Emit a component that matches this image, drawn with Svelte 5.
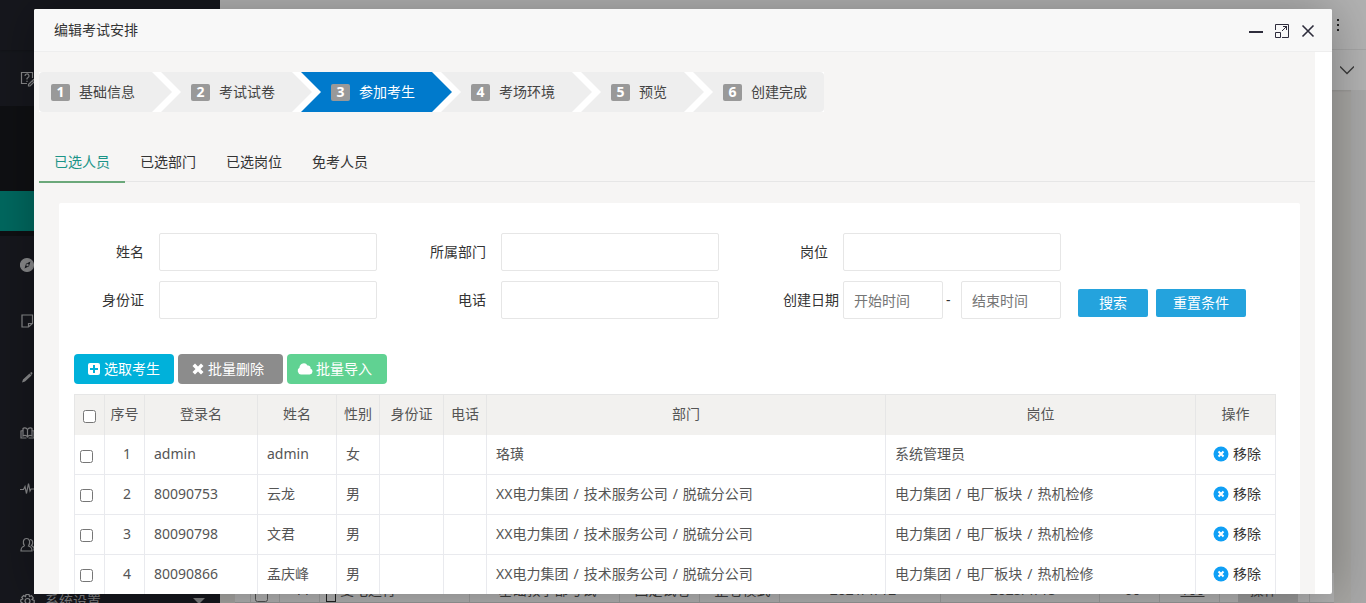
<script>
  let steps = ['基础信息', '考试试卷', '参加考生', '考场环境', '预览', '创建完成'];
  let currentStep = 2;

  let tabs = ['已选人员', '已选部门', '已选岗位', '免考人员'];
  let activeTab = 0;

  let columns = ['序号', '登录名', '姓名', '性别', '身份证', '电话', '部门', '岗位', '操作'];

  const dept = ['XX电力集团', '技术服务公司', '脱硫分公司'];
  const post = ['电力集团', '电厂板块', '热机检修'];

  let people = [
    { login: 'admin', name: 'admin', sex: '女', dept: ['珞璜'], post: ['系统管理员'] },
    { login: '80090753', name: '云龙', sex: '男', dept, post },
    { login: '80090798', name: '文君', sex: '男', dept, post },
    { login: '80090866', name: '孟庆峰', sex: '男', dept, post }
  ];

  function removePerson(person) {
    people = people.filter((p) => p !== person);
  }
</script>

<div class="page">
  <nav class="sidebar">
    <div class="logo"></div>
    <a class="menu-item" href="#exam" aria-label="exam">
      <svg viewBox="0 0 16 16"><path d="M7 12.500H1.500V1.500h11V7M5 5a2 2 0 1 1 2.800 1.800L7 7.500v1M7 9.800v1.200" /><path d="M8.500 13.500l5-5 1.500 1.500-5 5H8.500zM12 10l1.500 1.500" /></svg>
    </a>
    <div class="submenu">
      <div class="sub-item"></div>
      <div class="sub-item"></div>
      <div class="sub-item active"></div>
    </div>
    <a class="menu-item" href="#guide" aria-label="guide">
      <svg viewBox="0 0 16 16"><circle class="solid" cx="7" cy="8" r="6.500" /><path class="dark" d="M10.500 4.500L6 6.800l-1.500 4.700L9 9.300z" /><circle class="solid" cx="7.500" cy="8" r=".6" /></svg>
    </a>
    <a class="menu-item" href="#notes" aria-label="notes">
      <svg viewBox="0 0 16 16"><path d="M8.500 14H2V2h10.500v8.500zM8.500 14v-3.500h4" /></svg>
    </a>
    <a class="menu-item" href="#edit" aria-label="edit">
      <svg viewBox="0 0 16 16"><path class="pencil" d="M2 13.500l1-3 6.500-6 2 2-6.500 6zM10 4l1.500-1 1 1L11.800 6z" /></svg>
    </a>
    <a class="menu-item" href="#book" aria-label="book">
      <svg viewBox="0 0 16 16"><path d="M7.500 4.500C6 2.500 4 2.500 3 3.500v7.500c2-1 3.500-.500 4.500 1 1-1.500 2.500-2 4.500-1V3.500c-1-1-3-1-4.500 1V12M3 5.500L1 6v7h5.500M12 5.500l2 .5v7H8.500" /></svg>
    </a>
    <a class="menu-item" href="#stats" aria-label="stats">
      <svg viewBox="0 0 16 16"><path d="M0 8.500h3.500l1.500-3 1.500 7 2-10L10 10l1-2h4.500" /></svg>
    </a>
    <a class="menu-item" href="#users" aria-label="users">
      <svg viewBox="0 0 16 16"><path d="M4.500 9C2.500 6 3 1.500 6.500 1.500S10.500 6 8.500 9c3 1 3.500 2 3.500 5H1c0-3 .500-4 3.500-5M10 2.500c3 0 3.500 4 1.500 6 2 1 3 2 3 4.500H13" /></svg>
    </a>
    <a class="menu-item" href="#settings">
      <svg viewBox="0 0 16 16"><circle cx="7.500" cy="8" r="2.500" /><path d="M6 1.500h3l.5 2 2-.8 1.800 2.300-1.300 1.500 2.200 1v2.500l-2.200.6 1 2-2 1.900-2-1L8.500 15h-2.500l-.7-1.800-2 .8-1.800-2 1-2L.8 9V6.800L2.800 6l-1-1.700L3.700 2.500l1.800 1z" /></svg>
      <span>系统设置</span>
      <i class="caret"></i>
    </a>
  </nav>

  <div class="main">
    <header class="topbar">
      <svg class="dots" viewBox="0 0 4 16"><path d="M1 2h2v2h-2zM1 7h2v2h-2zM1 12h2v2h-2z" /></svg>
    </header>
    <div class="tagbar">
      <svg class="chevron" viewBox="0 0 14 14"><path d="M0 3.500l7 7 7-7" /></svg>
    </div>
    <div class="content">
      <div class="exam-row">
        <span style="width: 16px"></span>
        <span class="pick-exam" style="width: 29px"><input type="checkbox" aria-label="select exam" /></span>
        <span style="width: 40px">11</span>
        <span class="left" style="width: 150px"><i class="box"></i>变电运行</span>
        <span style="width: 150px">基础教学部考试</span>
        <span style="width: 80px">固定试卷</span>
        <span style="width: 80px">整卷模式</span>
        <span style="width: 161px">2021/1/12</span>
        <span style="width: 159px">2025/1/15</span>
        <span style="width: 60px">60</span>
        <span style="width: 60px"><a href="#score">100</a></span>
        <span style="width: 90px"><button class="more">操作 ·</button></span>
      </div>
    </div>
  </div>

  <div class="shade"></div>

  <section class="dialog">
    <header class="dialog-title">
      <span>编辑考试安排</span>
      <div class="controls">
        <button aria-label="minimize"><svg viewBox="0 0 16 16"><path class="thick" d="M1 10h14" /></svg></button>
        <button aria-label="maximize"><svg viewBox="0 0 16 16"><path class="thin" d="M1.500 8V2.500h13v13H8M1.500 10.500h5v5h-5zM8 9l5-5M9 4.500h3.500V8" /></svg></button>
        <button aria-label="close"><svg viewBox="0 0 16 16"><path class="cross" d="M2.500 3.500l11 11M13.500 3.500l-11 11" /></svg></button>
      </div>
    </header>

    <div class="dialog-body">
      <div class="inner">
        <ol class="steps">
          {#each steps as step, i}
            <li class:current={i === currentStep}><b>{i + 1}</b>{step}</li>
          {/each}
        </ol>

        <div class="tabs">
          {#each tabs as tab, i}
            <button class="tab" class:active={i === activeTab} on:click={() => (activeTab = i)}>{tab}</button>
          {/each}
        </div>

        <div class="panel">
          <form class="search" on:submit|preventDefault>
            <div class="form-row">
              <div class="field"><label for="name">姓名</label><input id="name" type="text" /></div>
              <div class="field"><label for="dept">所属部门</label><input id="dept" type="text" /></div>
              <div class="field"><label for="post">岗位</label><input id="post" type="text" /></div>
            </div>
            <div class="form-row">
              <div class="field"><label for="idcard">身份证</label><input id="idcard" type="text" /></div>
              <div class="field"><label for="phone">电话</label><input id="phone" type="text" /></div>
              <div class="field">
                <label class="wide" for="start">创建日期</label>
                <input id="start" class="date" type="text" placeholder="开始时间" />
                <span class="dash">-</span>
                <input class="date" type="text" placeholder="结束时间" aria-label="结束时间" />
              </div>
              <div class="actions">
                <button type="submit">搜索</button>
                <button type="reset">重置条件</button>
              </div>
            </div>
          </form>

          <div class="toolbar">
            <button class="pick">
              <svg viewBox="0 0 14 14"><path fill-rule="evenodd" d="M3 1h8a2 2 0 0 1 2 2v8a2 2 0 0 1-2 2H3a2 2 0 0 1-2-2V3a2 2 0 0 1 2-2zM6 3v3H3v2h3v3h2V8h3V6H8V3z" /></svg>
              选取考生
            </button>
            <button class="delete">
              <svg viewBox="0 0 14 14"><path d="M4 1.500l3 3 3-3L12.500 4l-3 3 3 3-2.500 2.500-3-3-3 3L1.500 10l3-3-3-3z" /></svg>
              批量删除
            </button>
            <button class="import">
              <svg class="cloud" viewBox="0 0 16 14"><path d="M4 12.500A3.800 3.800 0 0 1 2.500 5.500 4.300 4.300 0 0 1 10.500 3.500a2.500 2.500 0 0 1 3 3 3.100 3.100 0 0 1-.800 6z" /></svg>
              批量导入
            </button>
          </div>

          <table>
            <colgroup>
              <col style="width: 30px" />
              <col style="width: 40px" />
              <col style="width: 113px" />
              <col style="width: 79px" />
              <col style="width: 43px" />
              <col style="width: 64px" />
              <col style="width: 43px" />
              <col />
              <col style="width: 310px" />
              <col style="width: 80px" />
            </colgroup>
            <thead>
              <tr>
                <th><input type="checkbox" aria-label="select all" /></th>
                {#each columns as column}
                  <th>{column}</th>
                {/each}
              </tr>
            </thead>
            <tbody>
              {#each people as person, i}
                <tr>
                  <td class="check"><input type="checkbox" aria-label={person.name} /></td>
                  <td class="num">{i + 1}</td>
                  <td>{person.login}</td>
                  <td>{person.name}</td>
                  <td>{person.sex}</td>
                  <td></td>
                  <td></td>
                  <td>{#each person.dept as part, n}{#if n > 0}<span class="slash">/</span>{/if}{part}{/each}</td>
                  <td>{#each person.post as part, n}{#if n > 0}<span class="slash">/</span>{/if}{part}{/each}</td>
                  <td class="op">
                    <button on:click={() => removePerson(person)}>
                      <svg viewBox="0 0 16 16"><circle cx="8" cy="8" r="7.500" /><path d="M5.500 5.500l5 5M10.500 5.500l-5 5" /></svg>
                      移除
                    </button>
                  </td>
                </tr>
              {/each}
            </tbody>
          </table>
        </div>
      </div>
    </div>
  </section>
</div>

<style>
  .page {
    position: relative;
    display: flex;
    height: 100vh;
    overflow: hidden;
    font-family: "Noto Sans", "Noto Sans CJK SC", sans-serif;
    font-size: 14px;
    line-height: 20px;
    color: #333;
  }

  .page * {
    box-sizing: border-box;
  }

  button {
    font: inherit;
    color: inherit;
    border: none;
    background: none;
    padding: 0;
    cursor: pointer;
  }

  input {
    font: inherit;
  }

  input[type="checkbox"] {
    width: 13px;
    height: 13px;
    margin: 0;
  }

  /* sidebar */
  .sidebar {
    width: 220px;
    flex-shrink: 0;
    background: #20222a;
  }

  .logo {
    height: 50px;
    box-shadow: 0 1px 2px rgba(0, 0, 0, 0.15);
  }

  .menu-item {
    display: flex;
    align-items: center;
    height: 56px;
    padding: 2px 15px 0 20px;
    color: #b5b6b9;
    text-decoration: none;
  }

  .menu-item svg {
    width: 16px;
    height: 16px;
    margin-right: 9px;
    fill: none;
    stroke: #c4c5c8;
    stroke-width: 1.2;
  }

  .menu-item .solid {
    fill: #c4c5c8;
  }

  .menu-item .pencil {
    fill: #c4c5c8;
    stroke: none;
  }

  .menu-item .dark {
    fill: #20222a;
    stroke: none;
  }

  .caret {
    margin-left: auto;
    border: 6px solid transparent;
    border-top-color: #b5b6b9;
    border-bottom: none;
  }

  .submenu {
    padding: 5px 0;
    background: #16171c;
  }

  .sub-item {
    height: 40px;
  }

  .sub-item.active {
    background: #009688;
  }

  /* page behind the dialog */
  .main {
    flex: 1;
    display: flex;
    flex-direction: column;
    background: #f0eeea;
  }

  .topbar,
  .tagbar {
    display: flex;
    align-items: center;
    justify-content: flex-end;
    background: #fff;
  }

  .topbar {
    height: 50px;
    padding-right: 26px;
    border-bottom: 1px solid #eee;
  }

  .tagbar {
    height: 40px;
    padding-right: 12px;
    box-shadow: 0 1px 2px rgba(0, 0, 0, 0.1);
  }

  .dots {
    width: 4px;
    height: 16px;
    fill: #333;
  }

  .chevron {
    width: 14px;
    height: 14px;
    fill: none;
    stroke: #555;
    stroke-width: 1.4;
  }

  .content {
    flex: 1;
    display: flex;
    flex-direction: column;
    justify-content: flex-end;
    padding-left: 15px;
    border-right: 15px solid #f1f1f1;
  }

  .exam-row {
    display: flex;
    height: 30px;
    margin-right: 17px;
    border-bottom: 1px solid #ddd;
    background: #fff;
    color: #555;
  }

  .exam-row span {
    display: flex;
    align-items: center;
    justify-content: center;
    flex-shrink: 0;
    padding: 4px 0 0 6px;
    border-right: 1px solid #e2e2e2;
  }

  .exam-row .left {
    justify-content: flex-start;
  }

  .exam-row .pick-exam {
    align-items: flex-end;
    justify-content: flex-start;
    padding-left: 4px;
  }

  .exam-row a {
    color: inherit;
  }

  .box {
    width: 10px;
    height: 14px;
    margin-right: 4px;
    border: 1px solid #333;
    align-self: flex-end;
  }

  .more {
    width: 60px;
    height: 26px;
    background: #dcdcdc;
  }

  .shade {
    position: absolute;
    inset: 0;
    background: rgba(0, 0, 0, 0.3);
  }

  /* dialog */
  .dialog {
    position: absolute;
    inset: 9px 34px;
    display: flex;
    flex-direction: column;
    border-radius: 2px;
    background: #fff;
    box-shadow: 1px 1px 50px rgba(0, 0, 0, 0.3);
  }

  .dialog-title {
    display: flex;
    align-items: center;
    justify-content: space-between;
    height: 43px;
    flex-shrink: 0;
    padding: 0 16px 0 20px;
    border-bottom: 1px solid #eee;
    border-radius: 2px 2px 0 0;
    background: #f8f8f8;
  }

  .controls {
    display: flex;
    gap: 10px;
  }

  .controls svg {
    display: block;
    width: 16px;
    height: 16px;
    fill: none;
    stroke: #2e2d3c;
  }

  .thick {
    stroke-width: 2;
  }

  .cross {
    stroke-width: 1.6;
  }

  .dialog-body {
    flex: 1;
    min-height: 0;
    padding-right: 17px;
    overflow: hidden;
  }

  .inner {
    min-height: 100%;
    padding: 20px 0 15px 5px;
    background: #f6f5f4;
  }

  .steps {
    display: flex;
    width: fit-content;
    margin: 0 0 30px;
    padding: 0;
    list-style: none;
    background: #fff;
  }

  .steps li {
    display: flex;
    align-items: center;
    height: 40px;
    margin-right: -11px;
    padding: 0 37px 0 30px;
    background: #eee;
    clip-path: polygon(0 0, calc(100% - 20px) 0, 100% 50%, calc(100% - 20px) 100%, 0 100%, 20px 50%);
    color: #444;
  }

  .steps li:first-child {
    padding-left: 12px;
    border-radius: 4px 0 0 4px;
    clip-path: polygon(0 0, calc(100% - 20px) 0, 100% 50%, calc(100% - 20px) 100%, 0 100%);
  }

  .steps li:last-child {
    margin-right: 0;
    padding-right: 17px;
    border-radius: 0 4px 4px 0;
    clip-path: polygon(0 0, 100% 0, 100% 100%, 0 100%, 20px 50%);
  }

  .steps li.current {
    background: #007acc;
    color: #fff;
  }

  .steps b {
    width: 19px;
    height: 17px;
    margin-right: 9px;
    border-radius: 2px;
    background: #999;
    color: #fff;
    line-height: 16px;
    text-align: center;
  }

  .tabs {
    display: flex;
    height: 40px;
    border-bottom: 1px solid #e6e6e6;
  }

  .tab {
    height: 41px;
    padding: 0 15px;
    border-bottom: 2px solid transparent;
  }

  .tab.active {
    border-bottom-color: #6ba87a;
    color: #1c9488;
  }

  .panel {
    margin: 21px 15px 0 20px;
    padding: 30px 24px 15px 15px;
    border-radius: 2px;
    background: #fff;
  }

  .search {
    display: flex;
    flex-direction: column;
    gap: 10px;
    margin-bottom: 35px;
  }

  .form-row {
    display: flex;
    gap: 39px;
  }

  .field {
    display: flex;
    align-items: center;
  }

  .field label {
    width: 85px;
    padding-right: 15px;
    text-align: right;
  }

  .field label.wide {
    padding-right: 4px;
  }

  .field input {
    width: 218px;
    height: 38px;
    padding: 0 10px;
    border: 1px solid #e6e6e6;
    border-radius: 2px;
    background: #fff;
  }

  .field input.date {
    width: 100px;
  }

  .field input::placeholder {
    color: #757575;
  }

  .dash {
    width: 18px;
    padding-left: 3px;
  }

  .actions {
    display: flex;
    align-items: flex-end;
    gap: 8px;
    margin-left: -22px;
    padding-bottom: 2px;
  }

  .actions button {
    height: 28px;
    padding: 0 17px;
    min-width: 70px;
    border-radius: 2px;
    background: #24a3dd;
    color: #fff;
  }

  .toolbar {
    display: flex;
    gap: 4px;
    margin-bottom: 10px;
  }

  .toolbar button {
    display: flex;
    align-items: center;
    gap: 3px;
    width: 100px;
    height: 30px;
    padding-left: 13px;
    border-radius: 4px;
    color: #fff;
  }

  .toolbar svg {
    width: 14px;
    height: 14px;
    fill: #fff;
  }

  .toolbar svg.cloud {
    width: 16px;
  }

  .toolbar .pick {
    background: #00b1da;
  }

  .toolbar .delete {
    width: 105px;
    background: #8c8c8c;
  }

  .toolbar .import {
    padding-left: 10px;
    background: #60d292;
  }

  table {
    width: 100%;
    table-layout: fixed;
    border-collapse: collapse;
    color: #555;
  }

  th,
  td {
    height: 40px;
    padding: 0 0 2px;
    border: 1px solid #e9eaee;
  }

  th {
    border-color: #e6e6e6;
    border-bottom: none;
    background: #f2f1ef;
    font-weight: normal;
  }

  td {
    padding-left: 9px;
  }

  tbody tr:first-child td {
    padding-bottom: 0;
    border-top: none;
  }

  th input,
  td input {
    display: block;
  }

  th input[type="checkbox"] {
    margin: 6px auto 0;
  }

  td.check {
    padding-left: 5px;
  }

  td.check input {
    margin-top: 4px;
  }

  td.num {
    padding-left: 5px;
    text-align: center;
  }

  td.op {
    padding-left: 3px;
  }

  .slash {
    padding: 0 5px;
  }

  .op button {
    display: flex;
    align-items: center;
    gap: 4px;
    margin: 0 auto;
    color: #333;
  }

  .op svg {
    width: 16px;
    height: 16px;
  }

  .op circle {
    fill: #0f9ff5;
  }

  .op path {
    stroke: #fff;
    stroke-width: 2;
  }
</style>
